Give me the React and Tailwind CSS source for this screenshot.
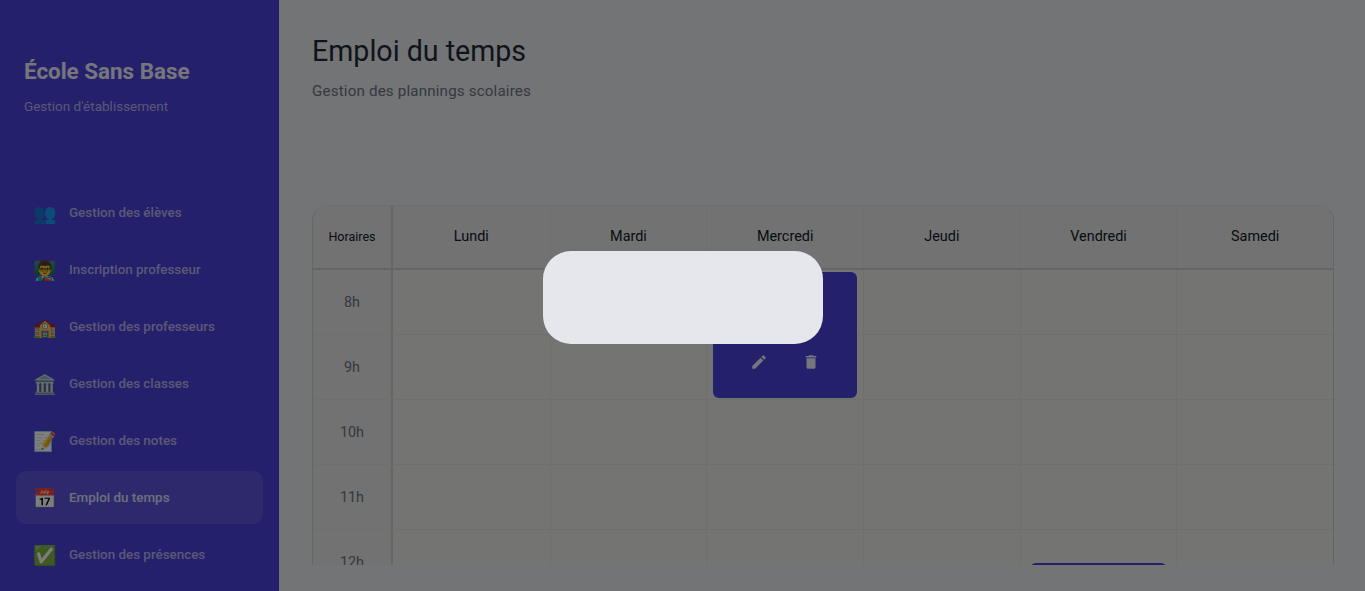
const navItems = [
  { icon: '👥', label: 'Gestion des élèves' },
  { icon: '👨‍🏫', label: 'Inscription professeur' },
  { icon: '🏫', label: 'Gestion des professeurs' },
  { icon: '🏛️', label: 'Gestion des classes' },
  { icon: '📝', label: 'Gestion des notes' },
  { icon: '📅', label: 'Emploi du temps', active: true },
  { icon: '✅', label: 'Gestion des présences' },
]

const days = ['Lundi', 'Mardi', 'Mercredi', 'Jeudi', 'Vendredi', 'Samedi']
const hours = ['8h', '9h', '10h', '11h', '12h']

const Sidebar = () => (
  <aside className="w-[280px] shrink-0 h-full bg-[#4a40d6] border-r border-[#e2e2ea] overflow-hidden">
    <div className="px-6 pt-[55px] h-[186px]">
      <h1 className="text-[22.4px] leading-[32px] font-bold text-white/90">École Sans Base</h1>
      <p className="mt-[9px] text-[13.5px] leading-[20px] text-white/60">Gestion d'établissement</p>
    </div>
    <nav className="px-4 flex flex-col gap-1">
      {navItems.map(item => (
        <div
          key={item.label}
          className={`h-[53px] rounded-[10px] pl-4 pt-[2px] flex items-center gap-3 ${item.active ? 'bg-white/10' : ''}`}
        >
          <span className="w-[25px] text-[19px] leading-none text-center">{item.icon}</span>
          <span className={`text-[13.4px] font-medium ${item.active ? 'text-white/80' : 'text-white/60'}`}>{item.label}</span>
        </div>
      ))}
    </nav>
  </aside>
)

const Timetable = () => (
  <div className="relative h-[360px] rounded-t-2xl border border-b-0 border-[#c8cdcb] border-t-[#dcdedd] overflow-hidden bg-[#e8e8e6]">
    <div className="flex h-[64px] border-b-2 border-[#c8cdcb] bg-[#e2e5e3]">
      <div className="w-[80px] shrink-0 border-r-2 border-[#c8cdcb] flex items-center justify-center text-[12.5px] text-[#111827]">
        Horaires
      </div>
      <div className="flex-1 grid grid-cols-6 pb-[1px]">
        {days.map(day => (
          <div key={day} className="flex items-center justify-center text-[14.4px] text-[#111827] border-l border-[#dcdedc] first:border-l-0">
            {day}
          </div>
        ))}
      </div>
    </div>
    {hours.map(hour => (
      <div key={hour} className="flex h-[65px] border-b border-[#dedfdd]">
        <div className="w-[80px] shrink-0 border-r-2 border-[#c8cdcb] bg-[#e3e5e3] pt-[1px] flex items-center justify-center text-[14.4px] text-[#6b7280]">
          {hour}
        </div>
        <div className="flex-1 grid grid-cols-6">
          {days.map(day => (
            <div key={day} className="border-l border-[#dedfdd] first:border-l-0" />
          ))}
        </div>
      </div>
    ))}
    {/* cours posés sur la grille */}
    <div className="absolute left-[400px] top-[66px] w-[144px] h-[126px] rounded-md bg-[#4a40d6] flex items-end justify-center gap-[34px] pb-[27px]">
      <svg viewBox="0 0 24 24" className="w-[18px] h-[18px] fill-white/90">
        <path d="M3 17.25V21h3.75L17.81 9.94l-3.75-3.75L3 17.25zM20.71 7.04a1 1 0 0 0 0-1.41l-2.34-2.34a1 1 0 0 0-1.41 0l-1.83 1.83 3.75 3.75 1.83-1.83z" />
      </svg>
      <svg viewBox="0 0 24 24" className="w-[18px] h-[18px] fill-white/90">
        <path d="M6 19c0 1.1.9 2 2 2h8c1.1 0 2-.9 2-2V7H6v12zM19 4h-3.5l-1-1h-5l-1 1H5v2h14V4z" />
      </svg>
    </div>
    <div className="absolute left-[717px] top-[357px] w-[137px] h-[60px] rounded-md bg-[#4a40d6]" />
  </div>
)

export default function App() {
  return (
    <div className="relative h-screen flex overflow-hidden bg-[#e6e8ea] font-['Roboto',sans-serif]">
      <Sidebar />
      <main className="flex-1 pl-8 pr-[31px] pt-[31px] min-w-0">
        <h2 className="text-[28.6px] leading-[40px] font-[450] text-[#1f2937]">Emploi du temps</h2>
        <p className="mt-[9px] text-[15.2px] leading-[22px] tracking-[0.15px] text-[#6b7280]">Gestion des plannings scolaires</p>
        <div className="mt-[103px]">
          <Timetable />
        </div>
      </main>
      {/* fond du modal */}
      <div className="fixed inset-0 bg-black/50" />
      <div className="absolute left-[543px] top-[251px] w-[280px] h-[92.5px] rounded-[28px] bg-[#e6e7ec]" />
    </div>
  )
}
